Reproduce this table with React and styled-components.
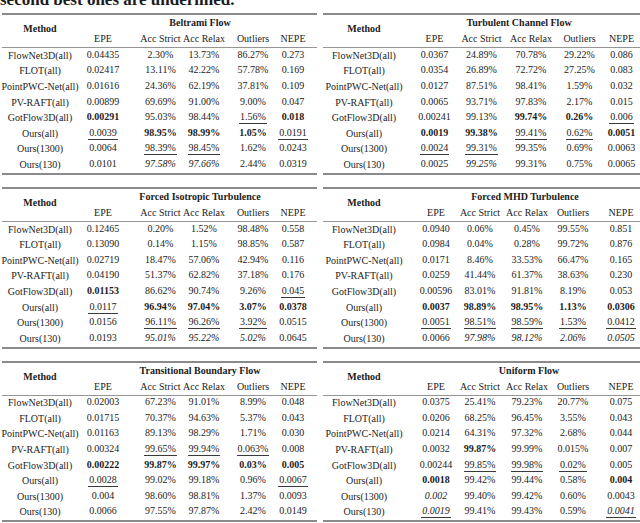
import React from 'react'
import styled, { createGlobalStyle } from 'styled-components'

const GlobalStyle = createGlobalStyle`
  html, body {
    margin: 0;
    padding: 0;
    background: #fff;
    overflow: hidden;
  }
  body {
    font-family: 'Liberation Serif', 'Times New Roman', serif;
    color: #1c1c1c;
  }
`

const Page = styled.div`
  width: 640px;
  height: 523px;
  overflow: hidden;
`

const Caption = styled.div`
  height: 8px;
  overflow: hidden;
  display: flex;
  align-items: flex-end;
  font-size: 17px;
  line-height: 17px;
  font-weight: 700;
  white-space: nowrap;
  margin-bottom: 5px;
`

const Blocks = styled.div`
  display: flex;
  flex-direction: column;
  gap: 12px;
`

const Pair = styled.div`
  display: grid;
  grid-template-columns: 315px 317px;
  column-gap: 6px;
  padding-left: 2px;
`

const Table = styled.div`
  border-top: 2px solid #8a8a8a;
  border-bottom: 2px solid #8a8a8a;
  font-size: 10px;
`

const Head = styled.div`
  display: grid;
  grid-template-columns: ${(p) => p.$cols};
  grid-template-rows: 16px 16px;
  padding-left: ${(p) => p.$start}px;
  border-bottom: 1px solid #959595;
`

const Body = styled.div`
  display: grid;
  grid-template-columns: ${(p) => p.$cols};
  grid-auto-rows: 15.6px;
  padding-left: ${(p) => p.$start}px;
`

const Cell = styled.div`
  display: flex;
  align-items: center;
  justify-content: center;
  min-width: 0;
  white-space: nowrap;
  line-height: 1;
`

const MethodHead = styled(Cell)`
  grid-row: 1 / 3;
  grid-column: 1;
  font-weight: 700;
  padding-bottom: 4px;
`

const Title = styled(Cell)`
  grid-row: 1;
  grid-column: 2 / 7;
  font-weight: 700;
  padding-left: ${(p) => Math.max(p.$shift, 0) * 2}px;
  padding-right: ${(p) => Math.max(-p.$shift, 0) * 2}px;
`

const ColHead = styled(Cell)`
  grid-row: 2;
`

const Value = styled.span`
  font-weight: ${(p) => (p.$b ? 700 : 400)};
  font-style: ${(p) => (p.$i ? 'italic' : 'normal')};
  padding: 0 1px 1px;
  border-bottom: 1px solid ${(p) => (p.$u ? '#3a3a3a' : 'transparent')};
`

const LEFT = { start: 10, cols: '56px 70px 45px 42px 56px 24px' }
const RIGHT_A = { start: 0, cols: '82px 59px 35px 64px 33px 51px' }
const RIGHT_B = { start: 0, cols: '82px 62px 26px 68px 24px 72px' }

const methods = [
  'FlowNet3D(all)',
  'FLOT(all)',
  'PointPWC-Net(all)',
  'PV-RAFT(all)',
  'GotFlow3D(all)',
  'Ours(all)',
  'Ours(1300)',
  'Ours(130)',
]

const tables = [
  [
    {
      title: 'Beltrami Flow',
      spec: LEFT,
      shift: 13.5,
      rows: [
        '0.04435 2.30% 13.73% 86.27% 0.273',
        '0.02417 13.11% 42.22% 57.78% 0.169',
        '0.01616 24.36% 62.19% 37.81% 0.109',
        '0.00899 69.69% 91.00% 9.00% 0.047',
        '0.00291|b 95.03% 98.44% 1.56%|u 0.018|b',
        '0.0039|u 98.95%|b 98.99%|b 1.05%|b 0.0191|u',
        '0.0064 98.39%|u 98.45%|u 1.62% 0.0243',
        '0.0101 97.58%|i 97.66%|i 2.44% 0.0319',
      ],
    },
    {
      title: 'Turbulent Channel Flow',
      spec: RIGHT_A,
      shift: -7,
      rows: [
        '0.0367 24.89% 70.78% 29.22% 0.086',
        '0.0354 26.89% 72.72% 27.25% 0.083',
        '0.0127 87.51% 98.41% 1.59% 0.032',
        '0.0065 93.71% 97.83% 2.17% 0.015',
        '0.00241 99.13% 99.74%|b 0.26%|b 0.006|u',
        '0.0019|b 99.38%|b 99.41%|u 0.62%|u 0.0051|b',
        '0.0024|u 99.31%|u 99.35% 0.69% 0.0063',
        '0.0025 99.25%|i 99.31% 0.75% 0.0065',
      ],
    },
  ],
  [
    {
      title: 'Forced Isotropic Turbulence',
      spec: LEFT,
      shift: 13.5,
      rows: [
        '0.12465 0.20% 1.52% 98.48% 0.558',
        '0.13090 0.14% 1.15% 98.85% 0.587',
        '0.02719 18.47% 57.06% 42.94% 0.116',
        '0.04190 51.37% 62.82% 37.18% 0.176',
        '0.01153|b 86.62% 90.74% 9.26% 0.045|u',
        '0.0117|u 96.94%|b 97.04%|b 3.07%|b 0.0378|b',
        '0.0156 96.11%|u 96.26%|u 3.92%|u 0.0515',
        '0.0193 95.01%|i 95.22%|i 5.02%|i 0.0645',
      ],
    },
    {
      title: 'Forced MHD Turbulence',
      spec: RIGHT_B,
      shift: -6,
      rows: [
        '0.0940 0.06% 0.45% 99.55% 0.851',
        '0.0984 0.04% 0.28% 99.72% 0.876',
        '0.0171 8.46% 33.53% 66.47% 0.165',
        '0.0259 41.44% 61.37% 38.63% 0.230',
        '0.00596 83.01% 91.81% 8.19% 0.053',
        '0.0037|b 98.89%|b 98.95%|b 1.13%|b 0.0306|b',
        '0.0051|u 98.51%|u 98.59%|u 1.53%|u 0.0412|u',
        '0.0066 97.98%|i 98.12%|i 2.06%|i 0.0505|i',
      ],
    },
  ],
  [
    {
      title: 'Transitional Boundary Flow',
      spec: LEFT,
      shift: 13.5,
      rows: [
        '0.02003 67.23% 91.01% 8.99% 0.048',
        '0.01715 70.37% 94.63% 5.37% 0.043',
        '0.01163 89.13% 98.29% 1.71% 0.030',
        '0.00324 99.65%|u 99.94%|u 0.063%|u 0.008',
        '0.00222|b 99.87%|b 99.97%|b 0.03%|b 0.005|b',
        '0.0028|u 99.02% 99.18% 0.96% 0.0067|u',
        '0.004 98.60% 98.81% 1.37% 0.0093',
        '0.0066 97.55% 97.87% 2.42% 0.0149',
      ],
    },
    {
      title: 'Uniform Flow',
      spec: RIGHT_B,
      shift: -2,
      rows: [
        '0.0375 25.41% 79.23% 20.77% 0.075',
        '0.0206 68.25% 96.45% 3.55% 0.043',
        '0.0214 64.31% 97.32% 2.68% 0.044',
        '0.0032 99.87%|b 99.99% 0.015% 0.007',
        '0.00244 99.85%|u 99.98%|u 0.02%|u 0.005',
        '0.0018|b 99.42% 99.44% 0.58% 0.004|b',
        '0.002|i 99.40% 99.42% 0.60% 0.0043',
        '0.0019|iu 99.41% 99.43% 0.59% 0.0041|iu',
      ],
    },
  ],
]

const columns = ['EPE', 'Acc Strict', 'Acc Relax', 'Outliers', 'NEPE']

// "0.0039|u" -> text plus flags (b = bold, i = italic, u = underlined)
const Entry = ({ raw }) => {
  const [text, flags = ''] = raw.split('|')
  return (
    <Cell>
      <Value $b={flags.includes('b')} $i={flags.includes('i')} $u={flags.includes('u')}>
        {text}
      </Value>
    </Cell>
  )
}

const ResultTable = ({ title, spec, shift, rows }) => (
  <Table>
    <Head $cols={spec.cols} $start={spec.start}>
      <MethodHead>Method</MethodHead>
      <Title $shift={shift}>{title}</Title>
      {columns.map((c) => (
        <ColHead key={c}>{c}</ColHead>
      ))}
    </Head>
    <Body $cols={spec.cols} $start={spec.start}>
      {rows.map((row, r) => (
        <React.Fragment key={methods[r]}>
          <Cell>{methods[r]}</Cell>
          {row.split(' ').map((v, k) => (
            <Entry key={k} raw={v} />
          ))}
        </React.Fragment>
      ))}
    </Body>
  </Table>
)

const App = () => {
  return (
    <Page>
      <GlobalStyle />
      <Caption>second best ones are underlined.</Caption>
      <Blocks>
        {tables.map((pair, i) => (
          <Pair key={i}>
            {pair.map((t) => (
              <ResultTable key={t.title} {...t} />
            ))}
          </Pair>
        ))}
      </Blocks>
    </Page>
  )
}

export default App
